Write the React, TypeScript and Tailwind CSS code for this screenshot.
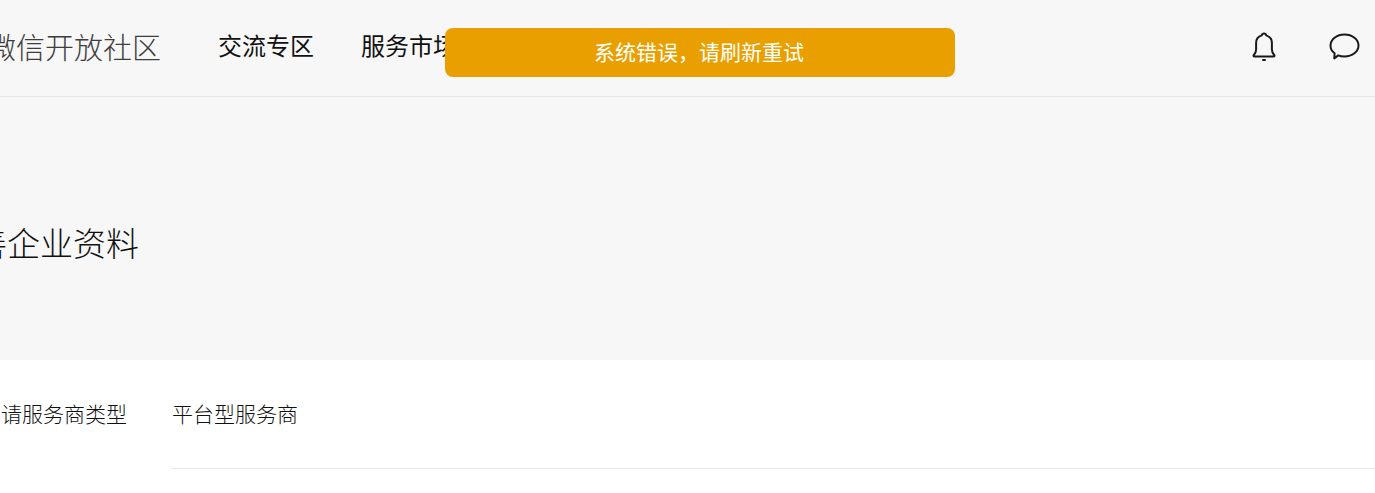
import React from "react";

const cjk = { fontFamily: '"Noto Sans CJK SC", sans-serif' };

function BellIcon(): React.ReactElement {
  return (
    <svg width="26" height="32" viewBox="0 0 26 32" fill="none" stroke="#1a1a1a" strokeWidth="2" strokeLinejoin="round" strokeLinecap="round">
      <path d="M13 2.500c1.300 0 2 .8 2.200 1.900 3.800 1.100 5.700 4 5.700 7.600v6.500c0 2.500 1 4.200 2.400 5.700.4.500.1 1.300-.6 1.300H3.300c-.7 0-1-.8-.6-1.300C4.100 22.700 5.100 21 5.100 18.500V12c0-3.600 1.900-6.500 5.700-7.600.2-1.100.9-1.900 2.200-1.900z" />
      <path d="M12 29h2" />
    </svg>
  );
}

function ChatIcon(): React.ReactElement {
  return (
    <svg width="32" height="30" viewBox="0 0 32 30" fill="none" stroke="#1a1a1a" strokeWidth="2" strokeLinejoin="round">
      <path d="M16.500 2.500c7.800 0 14 4.800 14 11s-6.200 11-14 11c-2.300 0-4.500-.3-6.300-1.100L6.300 26.500l.3-5.200C3.800 19.300 2.500 16.600 2.500 13.500c0-6.200 6.200-11 14-11z" />
    </svg>
  );
}

export default function App(): React.ReactElement {
  return (
    <div className="relative h-[493px] overflow-hidden bg-white" style={cjk}>
      <header className="flex h-[97px] items-center border-b border-[#e7e7e7] bg-[#f7f7f7]">
        <div className="-mt-[4px] -ml-[13px] text-[29px] leading-none font-light text-[#3d3d3d]">微信开放社区</div>
        <nav className="-mt-[6px] ml-[57px] flex gap-[47px] text-2xl leading-none font-normal text-[#111]">
          <span>交流专区</span>
          <span>服务市场</span>
        </nav>
        <div className="ml-auto flex items-center gap-[51px] pr-[15px] pb-[3px]">
          <BellIcon />
          <ChatIcon />
        </div>
      </header>

      <section className="flex h-[263px] items-center bg-[#f7f7f7] pt-[28px]">
        <h1 className="-ml-[59px] text-[33px] leading-none font-light text-[#111]">完善企业资料</h1>
      </section>

      <section className="flex bg-white pt-[39px]">
        <div className="-ml-[20px] w-[192px] text-[21px] leading-[28px] font-light text-[#111]">申请服务商类型</div>
        <div className="h-[70px] flex-1 border-b border-[#e7e7e7] text-[21px] leading-[28px] font-light text-[#111]">平台型服务商</div>
      </section>

      <div className="absolute top-[28px] left-[445px] flex h-[49px] w-[510px] items-center justify-center rounded-lg bg-[#ea9f00] pr-[2px] pb-[2px] text-[21px] leading-none font-normal text-white">
        系统错误，请刷新重试
      </div>
    </div>
  );
}
